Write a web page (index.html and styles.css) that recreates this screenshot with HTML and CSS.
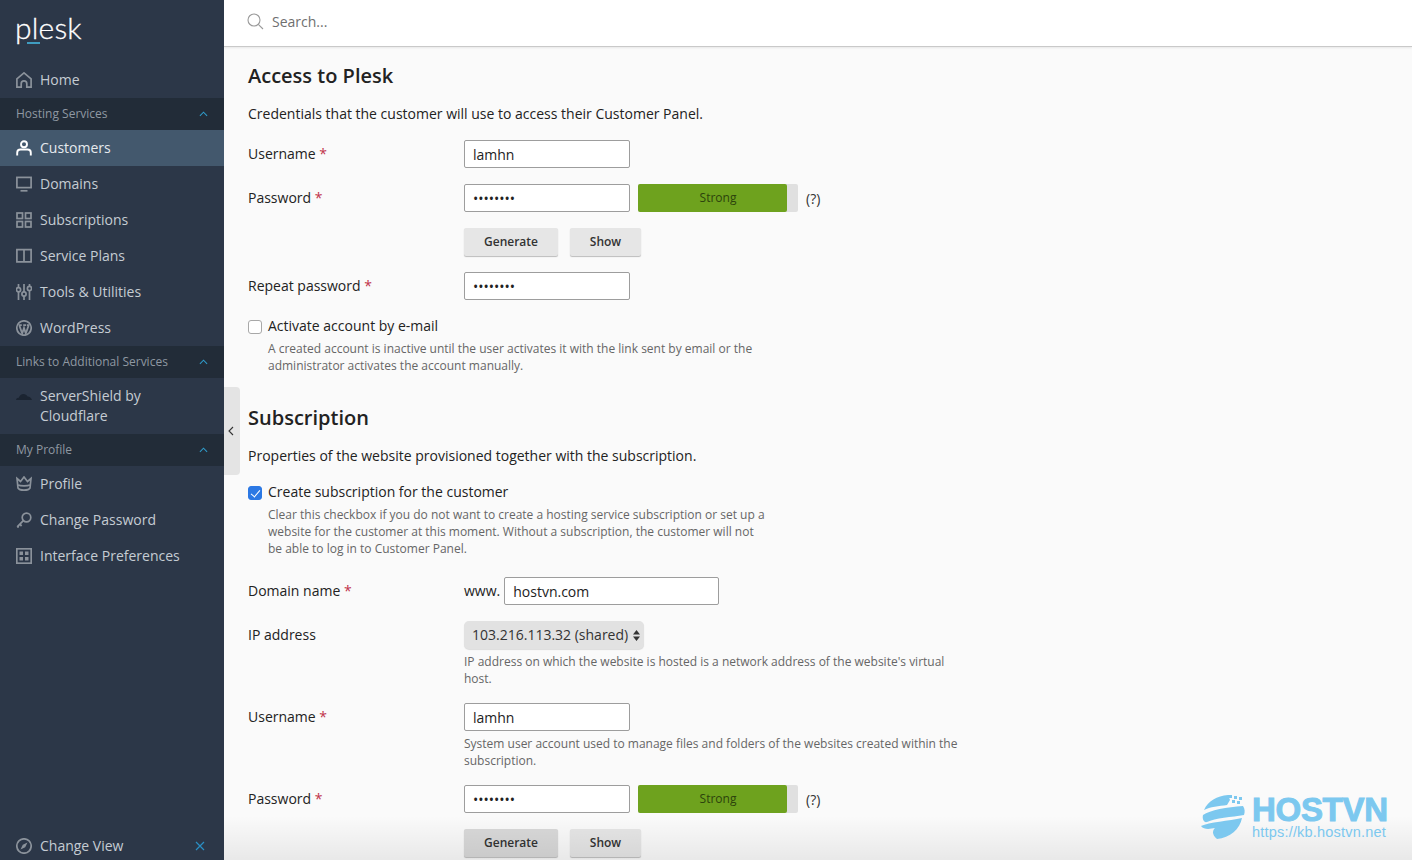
FILE: index.html
```html
<!DOCTYPE html>
<html lang="en">
<head>
<meta charset="utf-8">
<title>Plesk</title>
<link rel="stylesheet" href="styles.css">
</head>
<body>
<div class="app">
  <aside class="sidebar">
    <div class="logo">plesk</div>
    <nav class="nav">
      <a class="item"><svg class="ico" viewBox="0 0 16 16"><path d="M.9 15.200V6.800L8 .9l7.100 5.900v8.400h-4.300v-3.500a2.800 2.800 0 0 0-5.600 0v3.500z"/></svg>Home</a>
      <div class="group">Hosting Services<svg class="chev" viewBox="0 0 10 6"><path d="M1 5l4-4 4 4"/></svg></div>
      <a class="item active"><svg class="ico" viewBox="0 0 16 16"><circle cx="8" cy="4.200" r="3"/><path d="M1.200 15.500v-2.800c0-2 1.500-3.200 3.300-3.200h7c1.800 0 3.300 1.200 3.300 3.200v2.800"/></svg>Customers</a>
      <a class="item"><svg class="ico" viewBox="0 0 16 16"><rect x="0.900" y="1.400" width="14.200" height="10.200"/><path d="M4.500 14.800h7"/></svg>Domains</a>
      <a class="item"><svg class="ico" viewBox="0 0 16 16"><rect x="1" y="1" width="5.500" height="5.500"/><rect x="9.500" y="1" width="5.500" height="5.500"/><rect x="1" y="9.500" width="5.500" height="5.500"/><rect x="9.500" y="9.500" width="5.500" height="5.500"/></svg>Subscriptions</a>
      <a class="item"><svg class="ico" viewBox="0 0 16 16"><path d="M8 1.600H.9v12.300H8zM8 1.600h7.100v12.300H8z"/></svg>Service Plans</a>
      <a class="item"><svg class="ico" viewBox="0 0 16 16"><path d="M2.500 0v3.500M2.500 8v8M8 0v8M8 12v4M13.500 0v2M13.500 7v9"/><circle cx="2.500" cy="5.700" r="2.100"/><circle cx="8" cy="10" r="2.100"/><circle cx="13.500" cy="4.500" r="2.100"/></svg>Tools &amp; Utilities</a>
      <a class="item"><svg class="ico" viewBox="0 0 16 16"><circle cx="8" cy="8" r="7.200"/><path class="thick" d="M3.300 5.200L6.200 13.500 8 8l1.800 5.500 2.900-8.300M2.800 5.200h3M7.200 5.200h3M11 5.200h2.400"/></svg>WordPress</a>
      <div class="group">Links to Additional Services<svg class="chev" viewBox="0 0 10 6"><path d="M1 5l4-4 4 4"/></svg></div>
      <a class="item tall"><svg class="ico cloud" viewBox="0 0 16 16"><path d="M0 12c.3-1.600 1.600-2.400 2.800-2.200C3.500 7.500 5.400 6 7.500 6c1.800 0 3.300 1 4 2.600 1.800-.3 3.700 1.200 4.500 3.400z"/></svg><span>ServerShield by Cloudflare</span></a>
      <div class="group">My Profile<svg class="chev" viewBox="0 0 10 6"><path d="M1 5l4-4 4 4"/></svg></div>
      <a class="item"><svg class="ico" viewBox="0 0 16 16"><path d="M1 2.500l3.500 3L8 1l3.500 4.500 3.500-3-1 9.500c-1.500 2.800-10.500 2.800-12 0z"/><path d="M2 9c2.500 1.200 9.500 1.200 12 0"/></svg>Profile</a>
      <a class="item"><svg class="ico" viewBox="0 0 16 16"><circle cx="10.500" cy="5.500" r="4.300"/><path class="thick" d="M7.300 8.700L1.200 14.800M3.800 12.200l1.800 1.800M1.500 14.500l1.200 1"/></svg>Change Password</a>
      <a class="item"><svg class="ico" viewBox="0 0 16 16"><rect x="0.800" y="0.800" width="14.400" height="14.400"/><path class="solid" d="M3.500 3.500h3.500V7H3.500zM9 3.500h3.500V7H9zM3.500 9H7v3.500H3.500zM9 9h3.500v3.500H9z"/></svg>Interface Preferences</a>
    </nav>
    <div class="foot"><svg class="ico" viewBox="0 0 16 16"><circle cx="8" cy="8" r="7.200"/><path class="solid" d="M11.500 4.500L9.200 9.200 4.500 11.500l2.300-4.700z"/></svg>Change View<svg class="pin" viewBox="0 0 10 10"><path d="M1 1l8 8M9 1l-8 8"/></svg></div>
  </aside>
  <main class="main">
    <header class="topbar">
      <svg class="search-ico" viewBox="0 0 17 17"><circle cx="7" cy="7" r="6"/><path d="M11.300 11.300l4.700 4.700"/></svg>
      <span class="search-text">Search...</span>
    </header>
    <div class="content">
      <h2 class="title">Access to Plesk</h2>
      <p class="lead">Credentials that the customer will use to access their Customer Panel.</p>
      <div class="row"><label class="lab">Username <b>*</b></label><div class="field"><input class="inp" type="text" value="lamhn"></div></div>
      <div class="row"><label class="lab">Password <b>*</b></label><div class="field"><input class="inp" type="password" value="abcdefgh"><div class="meter"><div class="fill"></div><span class="meter-text">Strong</span></div><span class="hint">(?)</span></div></div>
      <div class="row"><span></span><div class="field btns"><button class="btn gen">Generate</button><button class="btn show">Show</button></div></div>
      <div class="row"><label class="lab">Repeat password <b>*</b></label><div class="field"><input class="inp" type="password" value="abcdefgh"></div></div>
      <div class="check"><input class="box" type="checkbox"><label>Activate account by e-mail</label></div>
      <p class="desc narrow indent">A created account is inactive until the user activates it with the link sent by email or the administrator activates the account manually.</p>

      <h2 class="title second">Subscription</h2>
      <p class="lead">Properties of the website provisioned together with the subscription.</p>
      <div class="check"><input class="box" type="checkbox" checked><label>Create subscription for the customer</label></div>
      <p class="desc narrow indent gapped">Clear this checkbox if you do not want to create a hosting service subscription or set up a website for the customer at this moment. Without a subscription, the customer will not be able to log in to Customer Panel.</p>
      <div class="row"><label class="lab">Domain name <b>*</b></label><div class="field www"><span>www.</span><input class="inp wide" type="text" value="hostvn.com"></div></div>
      <div class="row tight"><label class="lab">IP address</label><div class="field"><div class="select">103.216.113.32 (shared)<svg class="updown" viewBox="0 0 7 11"><path d="M3.500 0L7 4.500H0zM3.500 11L0 6.500h7z"/></svg></div></div></div>
      <p class="desc offset">IP address on which the website is hosted is a network address of the website's virtual host.</p>
      <div class="row tight"><label class="lab">Username <b>*</b></label><div class="field"><input class="inp" type="text" value="lamhn"></div></div>
      <p class="desc offset">System user account used to manage files and folders of the websites created within the subscription.</p>
      <div class="row"><label class="lab">Password <b>*</b></label><div class="field"><input class="inp" type="password" value="abcdefgh"><div class="meter"><div class="fill"></div><span class="meter-text">Strong</span></div><span class="hint">(?)</span></div></div>
      <div class="row"><span></span><div class="field btns"><button class="btn gen pressed">Generate</button><button class="btn show">Show</button></div></div>
    </div>
    <div class="fade"></div>
    <div class="collapse"><svg viewBox="0 0 6 10"><path d="M5 1L1 5l4 4"/></svg></div>
    <div class="mark">
      <svg class="globe" viewBox="0 0 44 44">
        <path d="M3 15C7 6 16 1 27 0l2 5-3 5C18 11 9 12 3 15z"/>
        <path d="M27 0h4v3h-4zM33 1h3v3h-3zM38 2h3v3h-3zM31 5h3v3h-3zM36 6h3v3h-3z"/>
        <path d="M2 20c7-5 24-8 40-9 2 3 2 6 1 9-12 2-29 3-37 7-3 1-5-3-4-7z"/>
        <path d="M0 31c8-4 28-5 41-8-2 11-12 20-25 21-6-5-4-9-2-11-5 1-11 2-14-2z"/>
      </svg>
      <div class="mark-text"><div class="mark-name">HOSTVN</div><div class="mark-url">https://kb.hostvn.net</div></div>
    </div>
  </main>
</div>
</body>
</html>
```
FILE: styles.css
```css
* { box-sizing: border-box; }
html, body { margin: 0; height: 860px; overflow: hidden; }
body { font-family: "Open Sans", sans-serif; font-size: 14px; line-height: 20px; color: #222; background: #fafafa; }
.app { display: flex; height: 860px; }

.sidebar { width: 224px; flex: none; height: 860px; background: #2c3748; color: #c5ccd3; display: flex; flex-direction: column; position: relative; overflow: hidden; }
.logo { position: relative; height: 62px; padding: 4px 0 0 15px; font-family: Lato, sans-serif; font-weight: 300; font-size: 30px; line-height: 46px; color: #fff; letter-spacing: 0.2px; -webkit-text-stroke: 0.3px #fff; }
.logo::after { content: ""; position: absolute; left: 27px; top: 42px; width: 13px; height: 2px; background: #3f9cc0; }
.nav { display: flex; flex-direction: column; }
.item { display: flex; align-items: center; gap: 8px; height: 36px; padding: 0 16px; }
.item.active { background: #43586d; color: #e6eaee; }
.item.tall { height: 56px; align-items: flex-start; padding-top: 8px; }
.ico { width: 16px; height: 16px; flex: none; fill: none; stroke: #8b929b; stroke-width: 1.700; }
.ico .thick { stroke-width: 1.800; }
.ico .solid { fill: #8b929b; stroke: none; }
.active .ico { stroke: #fff; stroke-width: 1.900; }
.ico.cloud { fill: #1b2431; stroke: none; margin-top: 2px; }
.group { display: flex; align-items: center; justify-content: space-between; height: 32px; padding: 0 16px; font-size: 12px; color: #8f98a2; background: #222c38; }
.chev { width: 9px; height: 6px; fill: none; stroke: #2f9bc9; stroke-width: 1.200; }
.foot { margin-top: auto; display: flex; align-items: center; gap: 8px; height: 36px; padding: 0 16px; position: relative; top: 4px; }
.pin { width: 10px; height: 10px; margin-left: auto; margin-right: 3px; fill: none; stroke: #2a8fc4; stroke-width: 1.200; }

.main { flex: 1; min-width: 0; height: 860px; position: relative; overflow: hidden; }
.topbar { height: 47px; background: #fff; border-bottom: 1px solid #c9c9c9; box-shadow: 0 1px 2px rgba(0,0,0,.08); display: flex; align-items: center; gap: 8px; padding: 0 24px 3px 23px; }
.search-ico { width: 17px; height: 17px; fill: none; stroke: #9a9a9a; stroke-width: 1.100; }
.search-text { color: #6f6f6f; }
.content { padding: 17px 24px 0; }
.title { margin: 0; font-size: 20px; line-height: 24px; font-weight: 600; color: #222; }
.second { margin-top: 32px; }
.lead { margin: 16px 0; }
.row { display: grid; grid-template-columns: 216px 1fr; align-items: center; margin-bottom: 16px; min-height: 28px; }
.row.tight { margin-bottom: 4px; }
.lab b { font-weight: 400; color: #c0324a; }
.field { display: flex; align-items: center; }
.inp { width: 166px; height: 28px; padding: 0 8px; border: 1px solid #9d9d9d; border-radius: 2px; background: #fff; font: 14px "Open Sans", sans-serif; color: #222; outline: none; }
.inp.wide { width: 215px; }
.meter { position: relative; width: 160px; height: 28px; margin-left: 8px; background: #e0e0e0; border-radius: 2px; display: flex; align-items: center; justify-content: center; }
.fill { position: absolute; left: 0; top: 0; bottom: 0; width: 149px; background: #6ea21e; border-radius: 2px; }
.meter-text { position: relative; font-size: 12px; color: #2c430c; }
.hint { margin-left: 8px; padding-top: 2px; font-size: 14px; color: #333; }
.btns { gap: 12px; }
.btn { height: 28px; padding: 0 0 2px; border: 0; border-radius: 2px; background: #e6e6e6; box-shadow: 0 1px 1px rgba(0,0,0,.25); font: 600 12px "Open Sans", sans-serif; color: #333; }
.btn.pressed { background: #d9d9d9; }
.gen { width: 94px; }
.show { width: 71px; }
.check { display: flex; align-items: center; gap: 6px; height: 20px; }
.box { appearance: none; -webkit-appearance: none; position: relative; width: 14px; height: 14px; margin: 1px 0 0; flex: none; background: #fff; border: 1px solid #a8a8a8; border-radius: 3px; }
.box:checked { background: #2b78e4; border-color: #2b78e4; }
.box:checked::after { content: ""; position: absolute; left: 3.500px; top: 1px; width: 4px; height: 8px; border: solid #fff; border-width: 0 1.500px 1.500px 0; transform: rotate(40deg); }
.desc { margin: 4px 0 16px; font-size: 12px; line-height: 17px; color: #666; }
.narrow { width: 500px; }
.indent { margin-left: 20px; margin-bottom: 0; }
.gapped { margin-bottom: 20px; }
.offset { margin-left: 216px; width: 500px; }
.www { gap: 4px; }
.select { display: flex; align-items: center; justify-content: space-between; width: 180px; height: 28px; padding: 0 4px 0 8px; background: #e2e2e2; border-radius: 5px; box-shadow: 0 1px 1px rgba(0,0,0,.12); color: #333; }
.updown { width: 7px; height: 11px; fill: #333; }

.fade { position: absolute; left: 0; right: 0; bottom: 0; height: 44px; background: linear-gradient(rgba(0,0,0,0), rgba(0,0,0,.07)); pointer-events: none; }
.collapse { position: absolute; left: 0; top: 387px; width: 16px; height: 88px; padding-right: 2px; background: #e4e4e4; border-radius: 0 4px 4px 0; display: flex; align-items: center; justify-content: center; }
.collapse svg { width: 6px; height: 10px; fill: none; stroke: #333; stroke-width: 1.100; }
.mark { position: absolute; left: 977px; top: 795px; display: flex; gap: 8px; }
.globe { width: 44px; height: 44px; fill: #7cc8ef; }
.mark-text { color: #7cc8ef; margin-left: -1px; }
.mark-name { font-family: "Liberation Sans", sans-serif; font-weight: 700; font-size: 33px; line-height: 29px; letter-spacing: -0.300px; -webkit-text-stroke: 1px #7cc8ef; }
.mark-url { font-family: "Liberation Sans", sans-serif; font-size: 14.500px; line-height: 16px; letter-spacing: 0.200px; }
```
